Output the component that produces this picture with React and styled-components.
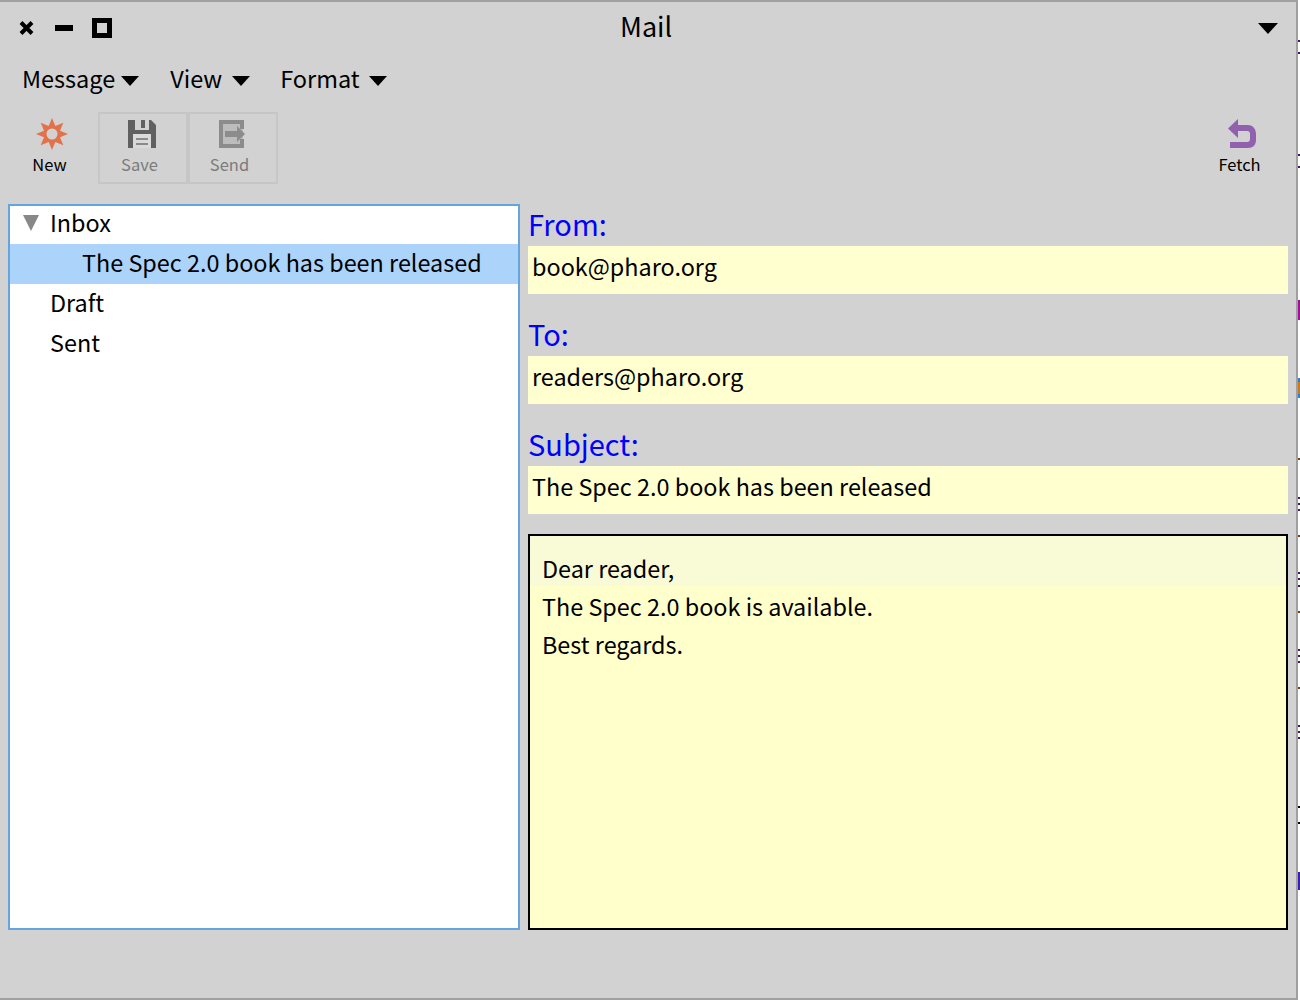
import React from 'react';
import styled, { createGlobalStyle } from 'styled-components';

const GlobalStyle = createGlobalStyle`
  html, body {
    margin: 0;
    padding: 0;
    background: #ffffff;
  }
  body {
    font-family: "Noto Sans CJK SC", "Noto Sans", sans-serif;
    color: #000000;
  }
`;

const Screen = styled.div`
  width: 1300px;
  height: 1000px;
  position: relative;
  overflow: hidden;
`;

const Window = styled.div`
  width: 1298px;
  height: 1000px;
  box-sizing: border-box;
  background: #d2d2d2;
  border-top: 2px solid #a0a0a0;
  border-bottom: 2px solid #a0a0a0;
  border-right: 2px solid #a0a0a0;
  display: flex;
  flex-direction: column;
`;

const TitleBar = styled.div`
  height: 52px;
  display: flex;
  align-items: center;
  padding: 0 18px;
  position: relative;
`;

const WindowControls = styled.div`
  display: flex;
  align-items: center;
  gap: 18px;
`;

const Title = styled.div`
  position: absolute;
  left: 620px;
  top: 6px;
  font-size: 27px;
  line-height: 36px;
`;

const MenuArrow = styled.div`
  margin-left: auto;
  width: 0;
  height: 0;
  border-left: 10px solid transparent;
  border-right: 10px solid transparent;
  border-top: 11px solid #000;
`;

const MenuBar = styled.div`
  height: 48px;
  margin-bottom: 10px;
  display: flex;
  align-items: center;
  padding-left: 22px;
`;

const Menu = styled.div`
  display: flex;
  align-items: center;
  font-size: 23.5px;
  line-height: 36px;
  margin-right: ${p => p.$gap || 0}px;
`;

const Caret = styled.span`
  width: 0;
  height: 0;
  margin-left: ${p => p.$gap}px;
  margin-top: 5px;
  border-left: 9px solid transparent;
  border-right: 9px solid transparent;
  border-top: 10px solid #000;
`;

const ToolBar = styled.div`
  height: 76px;
  display: flex;
  padding-left: 8px;
  padding-right: 8px;
`;

const ToolButton = styled.div`
  width: 90px;
  height: 72px;
  box-sizing: border-box;
  display: flex;
  flex-direction: column;
  align-items: center;
  padding-top: 3px;
  font-size: 16.5px;
  line-height: 26px;
  color: ${p => (p.$disabled ? '#7b7b7b' : '#000')};
  border: 2px solid ${p => (p.$disabled ? '#c6c6c6' : 'transparent')};
  svg {
    display: block;
    margin-right: 2px;
  }
`;

const ToolLabel = styled.span`
  margin-right: 7px;
`;

const Body = styled.div`
  display: flex;
  align-items: flex-start;
  padding: 16px 8px 0 8px;
  gap: 8px;
`;

const Tree = styled.div`
  width: 512px;
  height: 726px;
  box-sizing: border-box;
  background: #fff;
  border: 2px solid #64a5e0;
  font-size: 23.4px;
`;

const TreeRow = styled.div`
  height: 40px;
  box-sizing: border-box;
  padding-bottom: 4px;
  line-height: 36px;
  display: flex;
  align-items: center;
  padding-left: ${p => p.$indent}px;
  background: ${p => (p.$selected ? '#acd3fa' : 'transparent')};
  position: relative;
`;

const TopRow = styled(TreeRow)`
  height: 36px;
  margin-bottom: 2px;
`;

const Disclosure = styled.span`
  position: absolute;
  left: 13px;
  top: 9px;
  width: 0;
  height: 0;
  border-left: 8px solid transparent;
  border-right: 8px solid transparent;
  border-top: 16px solid #888;
`;

const Details = styled.div`
  width: 760px;
  display: flex;
  flex-direction: column;
`;

const Label = styled.div`
  height: 42px;
  line-height: 38px;
  font-size: 29px;
  color: #0000ff;
`;

const Field = styled.div`
  height: 48px;
  line-height: 40px;
  margin-bottom: 20px;
  padding-left: 4px;
  background: #ffffcf;
  font-size: 23.4px;
`;

const Message = styled.div`
  height: 396px;
  box-sizing: border-box;
  background: #ffffcc;
  border: 2px solid #000;
  font-size: 23.4px;
  line-height: 38px;
`;

const MessageLine = styled.div`
  padding-left: 12px;
`;

const CurrentLine = styled(MessageLine)`
  height: 37px;
  padding-top: 13px;
  margin-bottom: 1px;
  background: #f9fad6;
`;

const Spacer = styled.div`
  flex: 1;
`;

// bits of the window lying behind this one, seen at the right edge
const BackStrip = styled.svg`
  position: absolute;
  left: 1298px;
  top: 0;
`;

const CloseIcon = () => (
  <svg width="19" height="16" viewBox="0 0 19 16">
    <path d="M3 2.500L14 13.500M14 2.500L3 13.500" stroke="#000" strokeWidth="4" />
  </svg>
);

const MinimizeIcon = () => (
  <svg width="19" height="8" viewBox="0 0 19 8">
    <rect x="0" y="1" width="18" height="6" fill="#000" />
  </svg>
);

const MaximizeIcon = () => (
  <svg width="20" height="20" viewBox="0 0 20 20">
    <rect x="2.500" y="2.500" width="15" height="15" fill="none" stroke="#000" strokeWidth="5" />
  </svg>
);

const NewIcon = () => (
  <svg width="34" height="34" viewBox="0 0 34 34">
    <path
      fill="#e2724a"
      fillRule="evenodd"
      d="M17 1L20.300 9 28.300 5.700 25 13.700 33 17 25 20.300 28.300 28.300 20.300 25 17 33 13.700 25 5.700 28.300 9 20.300 1 17 9 13.700 5.700 5.700 13.700 9ZM17 11.500A5.500 5.500 0 1 0 17 22.500A5.500 5.500 0 1 0 17 11.500Z"
    />
  </svg>
);

const SaveIcon = () => (
  <svg width="34" height="34" viewBox="0 0 34 34">
    <path fill="#606060" d="M3 3H26L31 8V31H3Z" />
    <rect x="10" y="3" width="14" height="10" fill="#d2d2d2" />
    <rect x="16" y="3" width="4" height="8" fill="#606060" />
    <rect x="8" y="17" width="18" height="14" fill="#dadada" />
    <path d="M11 22H23M11 27H23" stroke="#8a8a8a" strokeWidth="2" />
  </svg>
);

const SendIcon = () => (
  <svg width="34" height="34" viewBox="0 0 34 34">
    <rect x="6" y="5" width="22" height="24" fill="#bcbcbc" />
    <path fill="none" stroke="#8c8c8c" strokeWidth="4" d="M27 12V5H6V29H27V22" />
    <path fill="#8c8c8c" d="M10 14H22V9L30 17 22 25V20H10Z" />
  </svg>
);

const FetchIcon = () => (
  <svg width="34" height="34" viewBox="0 0 34 34">
    <path
      fill="#9161ad"
      d="M3 11.500L13 2V8H23C28 8 31 12 31 17V23C31 28 28 31 23 31H5V25H22C24 25 25 24 25 22V17C25 15 24 14 22 14H13V21Z"
    />
  </svg>
);

const ticks = [
  [40, 2, '#3c1a5c'], [52, 2, '#3c1a5c'], [154, 2, '#3c1a5c'], [166, 2, '#3c1a5c'],
  [300, 20, '#a0109a'], [378, 20, '#2a80d0'], [382, 12, '#c87a20'], [458, 2, '#704020'],
  [497, 2, '#3c1a5c'], [503, 2, '#3c1a5c'], [509, 2, '#3c1a5c'], [535, 2, '#704020'],
  [572, 2, '#3c1a5c'], [578, 2, '#3c1a5c'], [585, 2, '#3c1a5c'], [611, 2, '#704020'],
  [649, 2, '#3c1a5c'], [655, 2, '#3c1a5c'], [661, 2, '#3c1a5c'], [687, 2, '#704020'],
  [725, 2, '#3c1a5c'], [731, 2, '#3c1a5c'], [737, 2, '#3c1a5c'], [806, 2, '#000'],
  [822, 2, '#000'], [872, 18, '#3a20b0'],
];

const App = () => (
  <Screen>
    <GlobalStyle />
    <Window>
      <TitleBar>
        <WindowControls>
          <CloseIcon />
          <MinimizeIcon />
          <MaximizeIcon />
        </WindowControls>
        <Title>Mail</Title>
        <MenuArrow />
      </TitleBar>
      <MenuBar>
        <Menu $gap={31}>Message<Caret $gap={6} /></Menu>
        <Menu $gap={30}>View<Caret $gap={10} /></Menu>
        <Menu>Format<Caret $gap={9} /></Menu>
      </MenuBar>
      <ToolBar>
        <ToolButton><NewIcon /><ToolLabel>New</ToolLabel></ToolButton>
        <ToolButton $disabled><SaveIcon /><ToolLabel>Save</ToolLabel></ToolButton>
        <ToolButton $disabled><SendIcon /><ToolLabel>Send</ToolLabel></ToolButton>
        <Spacer />
        <ToolButton><FetchIcon /><ToolLabel>Fetch</ToolLabel></ToolButton>
      </ToolBar>
      <Body>
        <Tree>
          <TopRow $indent={40}><Disclosure />Inbox</TopRow>
          <TreeRow $indent={72} $selected>The Spec 2.0 book has been released</TreeRow>
          <TreeRow $indent={40}>Draft</TreeRow>
          <TreeRow $indent={40}>Sent</TreeRow>
        </Tree>
        <Details>
          <Label>From:</Label>
          <Field>book@pharo.org</Field>
          <Label>To:</Label>
          <Field>readers@pharo.org</Field>
          <Label>Subject:</Label>
          <Field>The Spec 2.0 book has been released</Field>
          <Message>
            <CurrentLine>Dear reader,</CurrentLine>
            <MessageLine>The Spec 2.0 book is available.</MessageLine>
            <MessageLine>Best regards.</MessageLine>
          </Message>
        </Details>
      </Body>
    </Window>
    <BackStrip width="2" height="1000" viewBox="0 0 2 1000">
      {ticks.map(([y, h, c]) => (
        <rect key={y} x="0" y={y} width="2" height={h} fill={c} />
      ))}
    </BackStrip>
  </Screen>
);

export default App;
